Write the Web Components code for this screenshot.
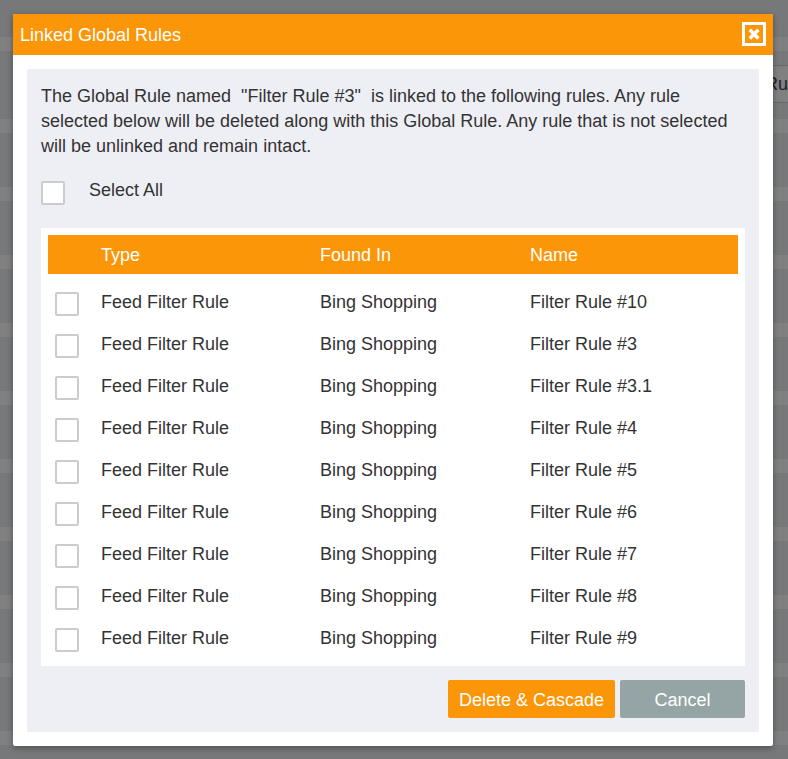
<!DOCTYPE html>
<html lang="en">
<head>
<meta charset="utf-8">
<title>Linked Global Rules</title>
<style>
html, body { margin: 0; min-height: 100%; }
body {
  font: 18px/25px "Liberation Sans", Arial, sans-serif;
  color: #333;
  background: #777879;
  --accent: #fa9608;
  --panel: #eeeff5;
  --muted: #95a5a5;
}
</style>
</head>
<body>
<dimmed-page>
  <modal-dialog heading="Linked Global Rules">
    <p slot="message">The Global Rule named &nbsp;"Filter Rule #3"&nbsp; is linked to the following rules. Any rule selected below will be deleted along with this Global Rule. Any rule that is not selected will be unlinked and remain intact.</p>
    <check-field slot="all">Select All</check-field>
    <rules-table></rules-table>
    <action-button slot="actions">Delete &amp; Cascade</action-button>
    <action-button slot="actions" kind="muted">Cancel</action-button>
  </modal-dialog>
</dimmed-page>

<script>
const checkboxCss = `
  input[type=checkbox] {
    appearance: none; display: block; box-sizing: border-box; flex: none;
    width: 24px; height: 24px; margin: 0;
    border: 2px solid #ccc; border-radius: 2px; background: #fff;
  }
  input[type=checkbox]:checked { background: var(--accent); box-shadow: inset 0 0 0 3px #fff; }
`;

class DimmedPage extends HTMLElement {
  constructor() {
    super();
    this.attachShadow({ mode: "open" }).innerHTML = `
      <style>
        :host {
          display: block; position: relative; box-sizing: border-box;
          min-height: 100vh; padding: 14px 15px 13px 13px; overflow: hidden;
          background:
            linear-gradient(#808080, #808080) 0 37px / 100% 14px no-repeat,
            linear-gradient(#777879, #777879) 0 0 / 100% 119px no-repeat,
            repeating-linear-gradient(#808080 0 14px, #777879 14px 68px) 0 119px / 100% 100% no-repeat,
            #777879;
        }
        .field {
          position: absolute; top: 65px; right: 0; box-sizing: border-box;
          width: 30px; height: 38px; padding: 6px 0; text-align: right;
          border: solid #686868; border-width: 1px 0;
          background: #808080; color: #222;
        }
      </style>
      <div class="field">Ru</div>
      <slot></slot>`;
  }
}

class ModalDialog extends HTMLElement {
  constructor() {
    super();
    this.attachShadow({ mode: "open" }).innerHTML = `
      <style>
        :host {
          display: block; position: relative; background: #fff;
          border-radius: 2px; box-shadow: 0 2px 6px rgba(0, 0, 0, .35);
        }
        header {
          display: flex; align-items: center; justify-content: space-between;
          height: 41px; padding: 0 7px; background: var(--accent); color: #fff;
        }
        h1 { margin: 0; padding-top: 2px; font-size: 18px; font-weight: 400; }
        .close {
          display: block; width: 24px; height: 24px; margin: 0 0 2px; padding: 0;
          border: 0; background: none; color: #fff; cursor: pointer;
        }
        .close svg { display: block; }
        .body { padding: 14px; }
        .panel { padding: 15px 14px 14px; background: var(--panel); border-radius: 2px; }
        ::slotted(p) { margin: 0 0 19px; }
        .actions { display: flex; justify-content: flex-end; gap: 5px; margin-top: 14px; }
      </style>
      <section role="dialog" aria-labelledby="title">
        <header>
          <h1 id="title"></h1>
          <button class="close" type="button" aria-label="Close">
            <svg width="24" height="24" viewBox="0 0 24 24" fill="none" stroke="currentColor">
              <rect x="1.5" y="1.5" width="21" height="21" stroke-width="3"/>
              <path d="M7.8 7.8l8.6 8.6M16.4 7.8l-8.6 8.6" stroke-width="3.5"/>
            </svg>
          </button>
        </header>
        <div class="body">
          <div class="panel">
            <slot name="message"></slot>
            <slot name="all"></slot>
            <slot></slot>
            <div class="actions"><slot name="actions"></slot></div>
          </div>
        </div>
      </section>`;
  }
  connectedCallback() {
    this.shadowRoot.querySelector("h1").textContent = this.getAttribute("heading");
  }
}

class CheckField extends HTMLElement {
  constructor() {
    super();
    this.attachShadow({ mode: "open" }).innerHTML = `
      <style>
        ${checkboxCss}
        :host { display: block; margin-bottom: 23px; }
        label { display: flex; gap: 24px; }
        label input[type=checkbox] { margin-top: 3px; }
      </style>
      <label><input type="checkbox"><span><slot></slot></span></label>`;
  }
}

class RulesTable extends HTMLElement {
  constructor() {
    super();
    const names = ["#10", "#3", "#3.1", "#4", "#5", "#6", "#7", "#8", "#9"];
    const rows = names.map((n, i) => `
      <tr>
        <td class="pick"><input type="checkbox" id="r${i}"></td>
        <td><label for="r${i}">Feed Filter Rule</label></td>
        <td>Bing Shopping</td>
        <td>Filter Rule ${n}</td>
      </tr>`).join("");
    this.attachShadow({ mode: "open" }).innerHTML = `
      <style>
        :host { display: block; padding: 7px; background: #fff; }
        table { width: 100%; border-collapse: collapse; table-layout: fixed; }
        col.c0 { width: 53px; }
        col.c1 { width: 219px; }
        col.c2 { width: 210px; }
        th, td { padding: 0; text-align: left; font-weight: 400; vertical-align: middle; }
        th { height: 37px; padding-top: 2px; background: var(--accent); color: #fff; }
        td { height: 42px; }
        .space td { height: 7px; line-height: 0; }
        td.pick { height: 38px; padding: 4px 0 0 7px; }
        ${checkboxCss}
      </style>
      <table>
        <colgroup><col class="c0"><col class="c1"><col class="c2"><col></colgroup>
        <thead><tr><th></th><th>Type</th><th>Found In</th><th>Name</th></tr></thead>
        <tbody class="space" aria-hidden="true"><tr><td colspan="4"></td></tr></tbody>
        <tbody>${rows}</tbody>
      </table>`;
  }
}

class ActionButton extends HTMLElement {
  constructor() {
    super();
    this.attachShadow({ mode: "open" }).innerHTML = `
      <style>
        :host { display: block; }
        button {
          display: block; min-width: 125px; height: 38px; padding: 2px 11px 0; border: 0;
          border-radius: 2px; background: var(--accent); color: #fff;
          font: inherit; cursor: pointer;
        }
        :host([kind=muted]) button { background: var(--muted); }
      </style>
      <button type="button"><slot></slot></button>`;
  }
}

customElements.define("dimmed-page", DimmedPage);
customElements.define("modal-dialog", ModalDialog);
customElements.define("check-field", CheckField);
customElements.define("rules-table", RulesTable);
customElements.define("action-button", ActionButton);
</script>
</body>
</html>
